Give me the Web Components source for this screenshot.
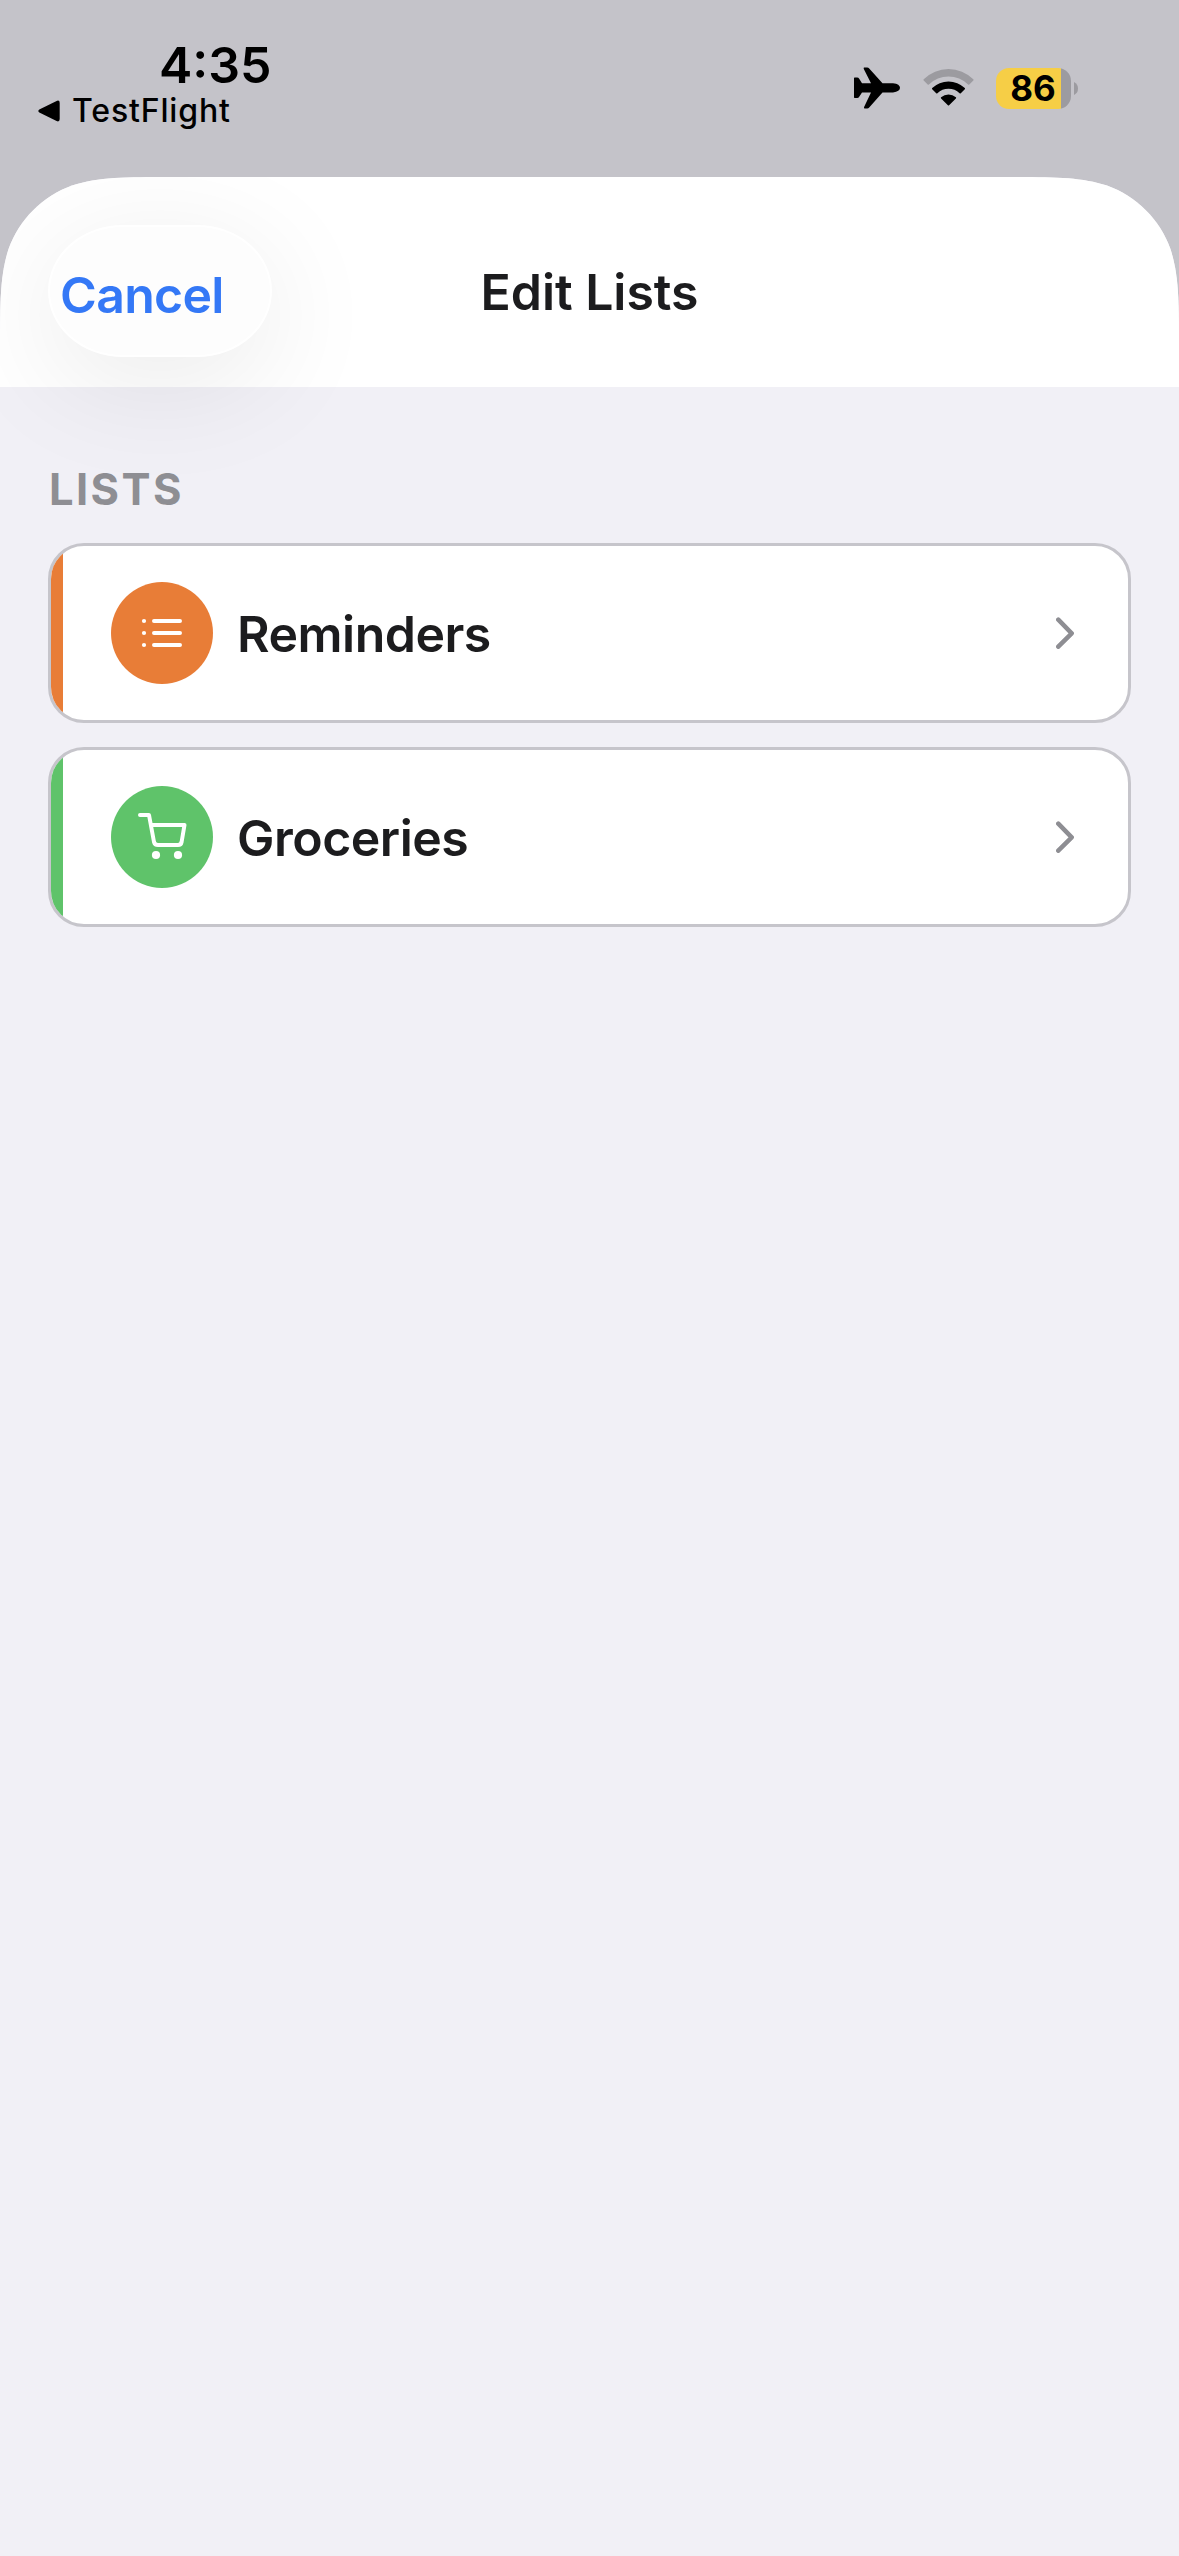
<!DOCTYPE html>
<html lang="en">
<head>
<meta charset="utf-8">
<title>Edit Lists</title>
<style>
  body {
    margin: 0;
    background: #c4c3c9;
    font-family: Inter, "Liberation Sans", sans-serif;
    color: #1c1c1e;
  }
</style>
</head>
<body>
<phone-screen>
  <status-bar slot="status" time="4:35" back="TestFlight" battery="86"></status-bar>
  <modal-sheet>
    <sheet-header slot="header">
      <pill-button slot="left">Cancel</pill-button>
      Edit Lists
    </sheet-header>
    <list-section heading="LISTS">
      <list-row color="#e87d37" icon="list">Reminders</list-row>
      <list-row color="#5fc36a" icon="cart">Groceries</list-row>
    </list-section>
  </modal-sheet>
</phone-screen>

<script>
"use strict";

class BaseElement extends HTMLElement {
  constructor() {
    super();
    this._root = this.attachShadow({ mode: "open" });
  }

  connectedCallback() {
    this._root.innerHTML = `<style>:host, * { box-sizing: border-box; } ${this._style}</style>${this._template}`;
  }
}

class PhoneScreen extends BaseElement {
  get _style() {
    return /*css*/ `
      :host {
        display: flex;
        flex-direction: column;
        width: 1179px;
        height: 2556px;
        overflow: hidden;
      }
    `;
  }

  get _template() {
    return /*html*/ `<slot name="status"></slot><slot></slot>`;
  }
}

class StatusBar extends BaseElement {
  get _style() {
    return /*css*/ `
      :host {
        display: flex;
        justify-content: space-between;
        height: 177px;
        flex: none;
        color: #000;
        padding: 35px 101px 0 38px;
      }
      .time {
        font-size: 50px;
        font-weight: 600;
        line-height: 60px;
        padding-left: 121px;
        letter-spacing: 0;
      }
      .back {
        display: flex;
        align-items: center;
        gap: 12px;
        font-size: 32px;
        font-weight: 500;
        line-height: 32px;
        letter-spacing: 0.85px;
      }
      .right {
        display: flex;
        align-items: center;
        height: 42px;
        margin-top: 32px;
      }
      svg {
        display: block;
      }
      .wifi {
        margin: 0 22px 0 23px;
      }
      .battery {
        display: flex;
        align-items: center;
        justify-content: center;
        width: 75px;
        height: 41px;
        border-radius: 13px;
        background: linear-gradient(90deg, #f6ce46 65px, #9c9ba0 65px);
        font-size: 35px;
        font-weight: 700;
        line-height: 41px;
        padding-right: 1px;
      }
      .nub {
        margin-left: 3px;
      }
    `;
  }

  get _template() {
    return /*html*/ `
      <div>
        <div class="time">${this.getAttribute("time")}</div>
        <div class="back">
          <svg width="22" height="22" viewBox="0 0 22 22"><path d="M1.3 9.4 18.6 .9Q21.7-.2 21.7 3v16q0 3.200-3.100 2.100L1.300 12.600Q-.7 11 1.300 9.400z"/></svg>
          <span>${this.getAttribute("back")}</span>
        </div>
      </div>
      <div class="right">
        <svg width="46" height="42" viewBox="0 0 46 42">
          <path d="M10 .5h3.200q1.200 0 2 1L28.500 16.200H39q7 .8 7 4.600t-7 4.600H28.500L15.200 40.500q-.8 1-2 1H10.500q-.8-.3-.4-1.400L17 25.400H8L5.200 29.800q-.7 1.200-2 1.200H.6q-.6 0-.6-.8V11.400q0-.8.600-.8h2.600q1.300 0 2 1.200L8 16.200h9L9.800 1.900Q9.400 .8 10 .5z"/>
        </svg>
        <svg class="wifi" width="51" height="42" viewBox="0 0 51 42">
          <path fill="#9c9ba0" d="M.7 12.300a35 35 0 0 1 49.600 0q.5.600 0 1.200l-4 4q-.6.500-1.200 0a28 28 0 0 0-39.200 0q-.6.500-1.200 0l-4-4q-.5-.6 0-1.200z"/>
          <path d="M9.200 21a23.500 23.500 0 0 1 32.600 0q.5.600 0 1.200l-4 4q-.6.500-1.200 0a16.300 16.300 0 0 0-22.200 0q-.6.500-1.200 0l-4-4q-.5-.6 0-1.200z"/>
          <path d="M18.100 30.200a11.500 11.500 0 0 1 14.800 0q.6.600 0 1.200l-6.800 6.800q-.6.600-1.200 0l-6.800-6.800q-.6-.6 0-1.200z"/>
        </svg>
        <div class="battery">${this.getAttribute("battery")}</div>
        <svg class="nub" width="4" height="13" viewBox="0 0 4 13"><path fill="#9c9ba0" d="M0 0q4 2 4 6.500T0 13z"/></svg>
      </div>
    `;
  }
}

class ModalSheet extends BaseElement {
  // continuous corners, 114px radius
  get _style() {
    return /*css*/ `
      :host {
        display: flex;
        flex-direction: column;
        flex: 1;
        background: #f1f0f6;
        clip-path: path("M0 174.300C0 124.100 0 99 8.540 72C19.270 42.500 42.500 19.270 72 8.540C99 0 124.100 0 174.300 0H1004.700C1054.900 0 1080 0 1107 8.540C1136.500 19.270 1159.730 42.500 1170.460 72C1179 99 1179 124.100 1179 174.300V2379H0z");
      }
    `;
  }

  get _template() {
    return /*html*/ `<slot name="header"></slot><slot></slot>`;
  }
}

class SheetHeader extends BaseElement {
  get _style() {
    return /*css*/ `
      :host {
        display: grid;
        grid-template-columns: 1fr auto 1fr;
        align-items: center;
        height: 210px;
        padding: 18px 48px 0;
        background: #fff;
      }
      .title {
        font-size: 50px;
        font-weight: 600;
        line-height: 60px;
        letter-spacing: -0.05px;
        padding-top: 1px;
      }
    `;
  }

  get _template() {
    return /*html*/ `
      <div><slot name="left"></slot></div>
      <div class="title"><slot></slot></div>
      <div></div>
    `;
  }
}

class PillButton extends BaseElement {
  get _style() {
    return /*css*/ `
      :host {
        display: flex;
        align-items: center;
        width: 224px;
        height: 132px;
        padding: 8px 0 0 10px;
        border: 2px solid #fff;
        border-radius: 75px / 66px;
        background: #fdfdfd;
        box-shadow: 0 24px 120px rgba(0, 0, 0, 0.085);
        color: #3478f6;
        font-size: 50px;
        font-weight: 600;
        letter-spacing: -0.7px;
        line-height: 60px;
      }
    `;
  }

  get _template() {
    return /*html*/ `<slot></slot>`;
  }
}

class ListSection extends BaseElement {
  get _style() {
    return /*css*/ `
      :host {
        display: flex;
        flex-direction: column;
        gap: 24px;
        padding: 75px 48px 0;
      }
      .heading {
        color: #8e8e93;
        font-size: 43.500px;
        font-weight: 700;
        line-height: 54px;
        letter-spacing: 2.400px;
        padding-left: 1px;
        margin-bottom: 3px;
      }
    `;
  }

  get _template() {
    return /*html*/ `
      <div class="heading">${this.getAttribute("heading")}</div>
      <slot></slot>
    `;
  }
}

class ListRow extends BaseElement {
  get _icon() {
    const icons = {
      list: `
        <path d="M43 39h26M43 51h26M43 63h26"/>
        <g fill="#fff" stroke="none"><circle cx="33" cy="39" r="2.100"/><circle cx="33" cy="51" r="2.100"/><circle cx="33" cy="63" r="2.100"/></g>`,
      cart: `
        <path d="M29 29h9l5 27q.7 3 4 3h20q3 0 3.600-3L73.500 39H40"/>
        <g fill="#fff" stroke="none"><circle cx="45" cy="69" r="4.100"/><circle cx="67" cy="69" r="4.100"/></g>`,
    };
    return icons[this.getAttribute("icon")];
  }

  get _style() {
    return /*css*/ `
      :host {
        display: flex;
        align-items: center;
        height: 180px;
        border: 3px solid #c6c5cb;
        border-radius: 36px;
        background: #fff;
        overflow: hidden;
      }
      .bar {
        align-self: stretch;
        width: 12px;
        background: ${this.getAttribute("color")};
      }
      .badge {
        width: 102px;
        height: 102px;
        margin: 0 24px 0 48px;
        border-radius: 50%;
        background: ${this.getAttribute("color")};
      }
      .label {
        flex: 1;
        font-size: 50px;
        font-weight: 600;
        line-height: 60px;
        letter-spacing: -0.5px;
        padding-top: 1px;
      }
      svg {
        display: block;
        fill: none;
        stroke: #fff;
        stroke-width: 4;
        stroke-linecap: round;
        stroke-linejoin: round;
      }
      .chevron {
        stroke: #8e8e93;
        stroke-width: 4.500;
        margin-right: 54px;
      }
    `;
  }

  get _template() {
    return /*html*/ `
      <div class="bar"></div>
      <div class="badge"><svg width="102" height="102" viewBox="0 0 102 102">${this._icon}</svg></div>
      <div class="label"><slot></slot></div>
      <svg class="chevron" width="18" height="32" viewBox="0 0 18 32"><path d="M2.300 2.700 15.700 16.300 2.300 29.700"/></svg>
    `;
  }
}

customElements.define("phone-screen", PhoneScreen);
customElements.define("status-bar", StatusBar);
customElements.define("modal-sheet", ModalSheet);
customElements.define("sheet-header", SheetHeader);
customElements.define("pill-button", PillButton);
customElements.define("list-section", ListSection);
customElements.define("list-row", ListRow);
</script>
</body>
</html>
